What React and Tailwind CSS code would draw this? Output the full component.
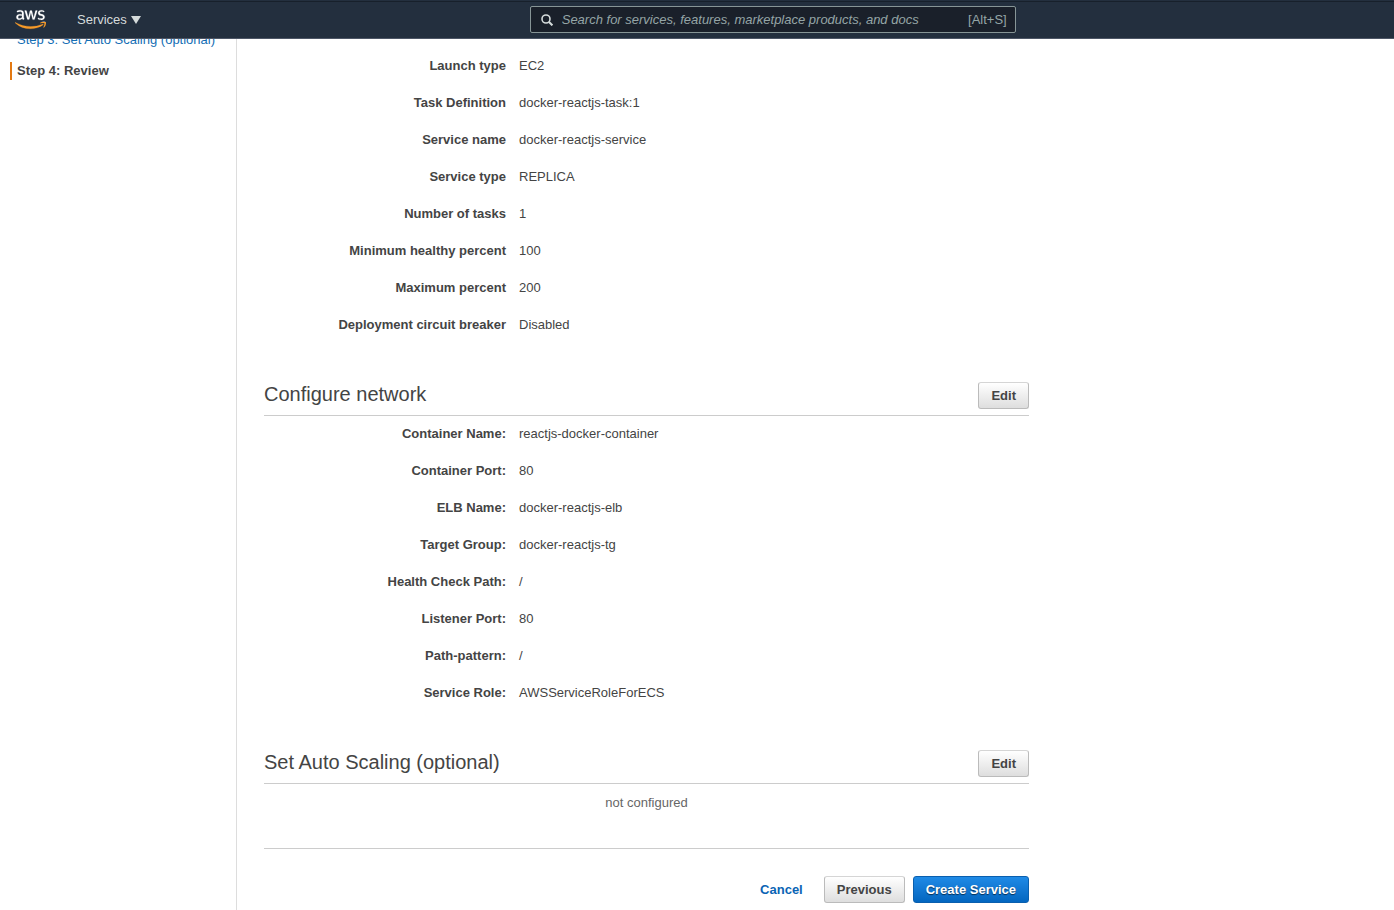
import { FaAws } from 'react-icons/fa'

const SERVICE_ROWS = [
  ['Launch type', 'EC2'],
  ['Task Definition', 'docker-reactjs-task:1'],
  ['Service name', 'docker-reactjs-service'],
  ['Service type', 'REPLICA'],
  ['Number of tasks', '1'],
  ['Minimum healthy percent', '100'],
  ['Maximum percent', '200'],
  ['Deployment circuit breaker', 'Disabled'],
]

const NETWORK_ROWS = [
  ['Container Name:', 'reactjs-docker-container'],
  ['Container Port:', '80'],
  ['ELB Name:', 'docker-reactjs-elb'],
  ['Target Group:', 'docker-reactjs-tg'],
  ['Health Check Path:', '/'],
  ['Listener Port:', '80'],
  ['Path-pattern:', '/'],
  ['Service Role:', 'AWSServiceRoleForECS'],
]

const GREY_BUTTON =
  'h-[27px] px-3 rounded-[3px] border border-[#bbb] border-t-[#d5d5d5] bg-linear-to-b from-white to-[#dedede] font-bold text-[#444]'

function Header() {
  return (
    <header className="sticky top-0 z-10 flex h-[39px] items-center border-y border-t-[#232f3e] border-b-[#4d5666] bg-[#232f3e] inset-shadow-[0_1px_0_#17202b]">
      <div className="flex w-[38%] shrink-0 items-center pl-[15px]">
        <a href="#home" aria-label="AWS">
          <svg width="0" height="0" className="absolute" aria-hidden="true">
            <linearGradient id="aws-fill" gradientUnits="userSpaceOnUse" x1="0" y1="0" x2="0" y2="512">
              <stop offset="0.6" stopColor="#fff" />
              <stop offset="0.6" stopColor="#f79a28" />
            </linearGradient>
          </svg>
          <FaAws className="h-[25px] w-[31px]" fill="url(#aws-fill)" stroke="url(#aws-fill)" strokeWidth="4" />
        </a>
        <button type="button" className="ml-[31px] flex items-center gap-1 text-[#d5dbdb]">
          Services
          <svg width="10" height="8" viewBox="0 0 10 8" fill="currentColor" aria-hidden="true">
            <path d="M0 0h10L5 8z" />
          </svg>
        </button>
      </div>
      <label className="flex h-[27px] w-[486px] items-center rounded-[2px] border border-[#879596] bg-[#1a202a] pr-2 pl-[10px] text-[#95a5a6]">
        <svg width="12" height="12" viewBox="0 0 12 12" fill="none" stroke="#d5dbdb" strokeWidth="1.6" aria-hidden="true">
          <circle cx="5" cy="5" r="4" />
          <path d="M7.8 7.8l3.6 3.6" strokeWidth="2" />
        </svg>
        <input
          type="search"
          aria-label="Search"
          placeholder="Search for services, features, marketplace products, and docs"
          className="ml-[9px] min-w-0 flex-1 bg-transparent italic outline-none placeholder:text-[#95a5a6]"
        />
        <span>[Alt+S]</span>
      </label>
    </header>
  )
}

function Section({ title, children }) {
  return (
    <section className="pt-[30px]">
      <div className="flex items-start justify-between border-b border-[#ccc] pb-[6px]">
        <h2 className="text-[20px] leading-6">{title}</h2>
        <button type="button" className={GREY_BUTTON}>Edit</button>
      </div>
      {children}
    </section>
  )
}

function Details({ rows }) {
  return (
    <dl>
      {rows.map(([label, value]) => (
        <div key={label} className="flex gap-[13px] pb-[17px]">
          <dt className="w-[242px] shrink-0 text-right font-bold">{label}</dt>
          <dd>{value}</dd>
        </div>
      ))}
    </dl>
  )
}

export default function App() {
  return (
    <div className="flex min-h-screen flex-col bg-white font-['Liberation_Sans',Arial,sans-serif] text-[13px] leading-5 text-[#444]">
      <Header />
      <div className="flex flex-1">
        <nav className="w-[237px] shrink-0 border-r border-[#ddd] pl-[10px]">
          <ol className="-mt-[9px]">
            <li className="pl-[7px]">
              <a href="#step-3" className="text-[#146eb4]">Step 3: Set Auto Scaling (optional)</a>
            </li>
            <li className="mt-3 border-l-2 border-[#e47911] pl-[5px] leading-[18px] font-bold" aria-current="step">
              Step 4: Review
            </li>
          </ol>
        </nav>

        <main className="max-w-[792px] flex-1 pt-[17px] pb-[7px] pl-[27px]">
          <Details rows={SERVICE_ROWS} />

          <Section title="Configure network">
            <div className="pt-2">
              <Details rows={NETWORK_ROWS} />
            </div>
          </Section>

          <Section title="Set Auto Scaling (optional)">
            <p className="pt-[9px] text-center text-[#666]">not configured</p>
          </Section>

          <div className="mt-[35px] flex items-center justify-end border-t border-[#ccc] pt-[27px]">
            <a href="#cancel" className="mr-[21px] font-bold text-[#0a64b4]">Cancel</a>
            <button type="button" className={GREY_BUTTON}>Previous</button>
            <button
              type="button"
              className="ml-2 h-[27px] rounded-[3px] border border-[#0a5fae] bg-linear-to-b from-[#1f8ae6] to-[#0366c0] px-3 font-bold text-white text-shadow-[0_1px_1px_rgb(0_0_0/0.6)]"
            >
              Create Service
            </button>
          </div>
        </main>
      </div>
    </div>
  )
}
